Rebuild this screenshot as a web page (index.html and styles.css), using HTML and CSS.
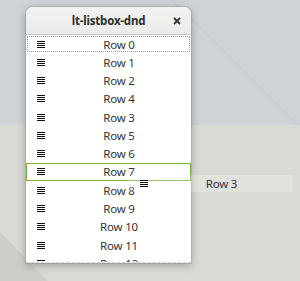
FILE: index.html
```html
<!DOCTYPE html>
<html lang="en">
<head>
  <meta charset="UTF-8">
  <title>lt-listbox-dnd</title>
  <link rel="stylesheet" href="styles.css">
</head>
<body>
  <div class="desktop">
    <svg class="wallpaper" width="300" height="281" viewBox="0 0 300 281">
      <rect x="0" y="0" width="300" height="125" fill="#cfd2d6"/>
      <rect x="0" y="125" width="300" height="156" fill="#d9dad5"/>
      <polygon points="0,232 0,281 48,281" fill="#cdcec9"/>
      <line x1="172" y1="0" x2="298" y2="125" stroke="#bfcbd6" stroke-width="1"/>
    </svg>

    <div class="window">
      <div class="titlebar">
        <span class="title">lt-listbox-dnd</span>
        <svg class="close" width="8" height="8" viewBox="0 0 8 8"><path d="M1 1l6 6M7 1l-6 6" stroke="#2e3436" stroke-width="1.8"/></svg>
      </div>
      <div class="list" id="list"></div>
    </div>

    <div class="drag-icon">
      <svg class="grip" width="8" height="7" viewBox="0 0 8 7"><path d="M0 0h8v1H0zM0 2h8v1H0zM0 4h8v1H0zM0 6h8v1H0z" fill="#111"/></svg>
      <span class="label">Row 3</span>
    </div>
  </div>

  <script>
    const order = [0, 1, 2, 4, 3, 5, 6, 7, 8, 9, 10, 11, 12];
    const list = document.getElementById('list');
    const grip = '<svg class="grip" width="8" height="7" viewBox="0 0 8 7"><path d="M0 0h8v1H0zM0 2h8v1H0zM0 4h8v1H0zM0 6h8v1H0z" fill="#111"/></svg>';
    order.forEach(function (n, i) {
      const row = document.createElement('div');
      row.className = 'row';
      if (i === 0) row.className += ' focus';
      if (n === 7) row.className += ' drop';
      row.innerHTML = grip + '<span class="label">Row ' + n + '</span>';
      list.appendChild(row);
    });
  </script>
</body>
</html>
```

FILE: styles.css
```css
body { margin: 0; width: 300px; height: 281px; overflow: hidden; font-family: "Noto Sans", "DejaVu Sans", sans-serif; color: #2e3436; }
.desktop { position: relative; width: 300px; height: 281px; padding-top: 7px; box-sizing: border-box; }
.wallpaper { position: absolute; left: 0; top: 0; z-index: -1; }

.window { margin-left: 26px; width: 165px; height: 256px; background: #fff; border-radius: 7px 7px 0 0; overflow: hidden; display: flex; flex-direction: column; box-shadow: 0 2px 9px rgba(0,0,0,0.3), 0 0 0 1px rgba(0,0,0,0.08); }
.titlebar { height: 27px; flex: none; display: flex; align-items: center; justify-content: center; position: relative; background: linear-gradient(#f2f2f1, #ebebea); border-bottom: 1px solid #c9c9c6; }
.title { font-size: 11.5px; font-weight: bold; letter-spacing: -0.2px; color: #2b2f30; }
.close { position: absolute; right: 10px; top: 10px; }

.list { flex: 1; overflow: hidden; border-bottom: 1px dashed #cfcfcf; }
.row { height: 18.27px; display: flex; align-items: center; padding-left: 11px; box-sizing: border-box; font-size: 11.5px; }
.row .label { flex: 1; text-align: center; padding-left: 2px; letter-spacing: -0.2px; }
.row .grip { flex: none; }
.row.focus { outline: 1px dotted #9a9a9a; outline-offset: -2px; }
.row.drop { box-shadow: inset 0 0 0 1px #78b548; }

.drag-icon { position: absolute; left: 128px; top: 175px; width: 165px; height: 17px; display: flex; align-items: center; padding-left: 12px; box-sizing: border-box; background: rgba(255,255,255,0.22); font-size: 11.5px; }
.drag-icon .label { flex: 1; text-align: center; padding-left: 2px; letter-spacing: -0.2px; }
```
